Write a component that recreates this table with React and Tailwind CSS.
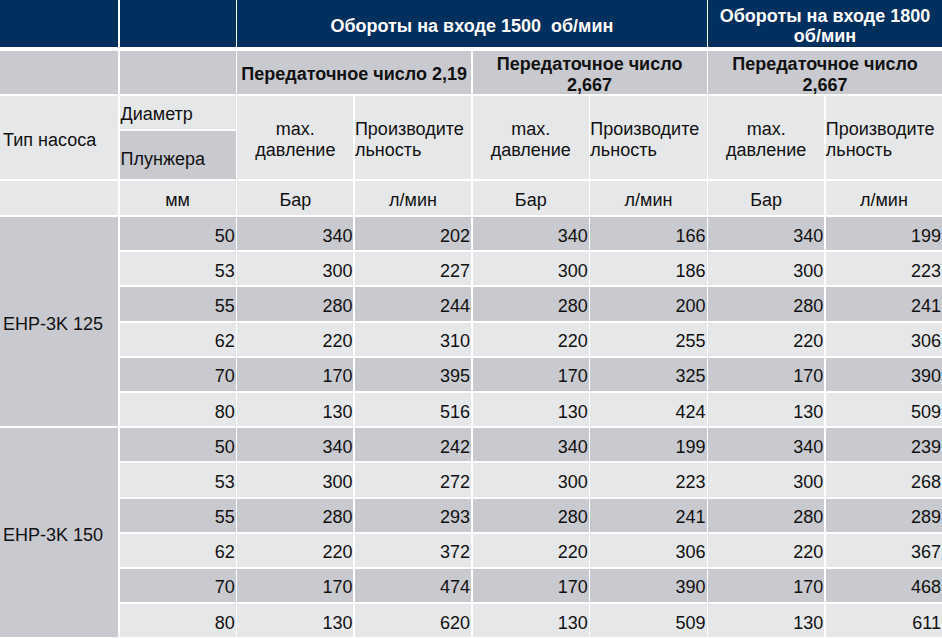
const groups = [
  {
    name: "EHP-3K 125",
    rows: [
      [50, 340, 202, 340, 166, 340, 199],
      [53, 300, 227, 300, 186, 300, 223],
      [55, 280, 244, 280, 200, 280, 241],
      [62, 220, 310, 220, 255, 220, 306],
      [70, 170, 395, 170, 325, 170, 390],
      [80, 130, 516, 130, 424, 130, 509]
    ]
  },
  {
    name: "EHP-3K 150",
    rows: [
      [50, 340, 242, 340, 199, 340, 239],
      [53, 300, 272, 300, 223, 300, 268],
      [55, 280, 293, 280, 241, 280, 289],
      [62, 220, 372, 220, 306, 220, 367],
      [70, 170, 474, 170, 390, 170, 468],
      [80, 130, 620, 130, 509, 130, 611]
    ]
  }
]

const dark = "bg-[#c9cacf]"
const light = "bg-[#e6e7e9]"
const cols = "grid grid-cols-[118px_repeat(7,1fr)] gap-x-[1.5px]"

const App = () => {
  return (
    <div
      className="w-[942px] h-[638px] overflow-hidden bg-white text-[18px] text-[#111] leading-[21px]"
      style={{ fontFamily: '"Liberation Sans", Arial, sans-serif' }}
    >

      {/* blue header */}
      <div className={`${cols} h-[47px] mb-[4px] text-white font-bold`}>
        <div className="bg-[#012f5e]" />
        <div className="bg-[#012f5e]" />
        <div className="col-span-4 bg-[#012f5e] flex items-center justify-center whitespace-pre pt-[5px]">
          Обороты на входе 1500  об/мин
        </div>
        <div className="col-span-2 bg-[#012f5e] flex items-center justify-center text-center leading-[20px] pt-[4px]">
          Обороты на входе 1800<br />об/мин
        </div>
      </div>

      <div className={`${cols} gap-y-[2px] grid-rows-[43px_33px_48px_34px_repeat(12,33.2px)]`}>

        {/* ratio row */}
        <div className={dark} />
        <div className={dark} />
        <div className={`col-span-2 ${dark} flex items-center justify-center font-bold pt-[4px]`}>
          Передаточное число 2,19
        </div>
        <div className={`col-span-2 ${dark} flex items-center justify-center text-center font-bold pt-[4px]`}>
          Передаточное число<br />2,667
        </div>
        <div className={`col-span-2 ${dark} flex items-center justify-center text-center font-bold pt-[4px]`}>
          Передаточное число<br />2,667
        </div>

        {/* column titles */}
        <div className={`row-span-2 ${light} flex items-center pl-[3px] pt-[5px]`}>
          Тип насоса
        </div>
        <div className={`${light} flex items-center pl-[1px] pt-[4px]`}>
          Диаметр
        </div>
        {[0, 1, 2].map((i) => (
          <div key={i} className="contents">
            <div className={`row-span-2 ${light} flex items-center justify-center text-center pt-[5px]`}>
              max.<br />давление
            </div>
            <div className={`row-span-2 ${light} flex items-center pt-[5px]`}>
              Производите<br />льность
            </div>
          </div>
        ))}
        <div className={`${dark} flex items-center pl-[1px] pt-[8px]`}>
          Плунжера
        </div>

        {/* units */}
        <div className={light} />
        <div className={`${light} flex items-center justify-center pt-[5px]`}>мм</div>
        {[0, 1, 2].map((i) => (
          <div key={i} className="contents">
            <div className={`${light} flex items-center justify-center pt-[5px]`}>Бар</div>
            <div className={`${light} flex items-center justify-center pt-[5px]`}>л/мин</div>
          </div>
        ))}

        {/* data */}
        {groups.map((g) => (
          <div key={g.name} className="contents">
            <div className={`row-span-6 ${dark} flex items-center pl-[3px] pt-[5px]`}>
              {g.name}
            </div>
            {g.rows.map((r, ri) => (
              <div key={ri} className="contents">
                {r.map((v, ci) => (
                  <div
                    key={ci}
                    className={`${ri % 2 === 0 ? dark : light} flex items-center justify-end pr-[1px] pt-[5px]`}
                  >
                    {v}
                  </div>
                ))}
              </div>
            ))}
          </div>
        ))}

      </div>
    </div>
  )
}

export default App
